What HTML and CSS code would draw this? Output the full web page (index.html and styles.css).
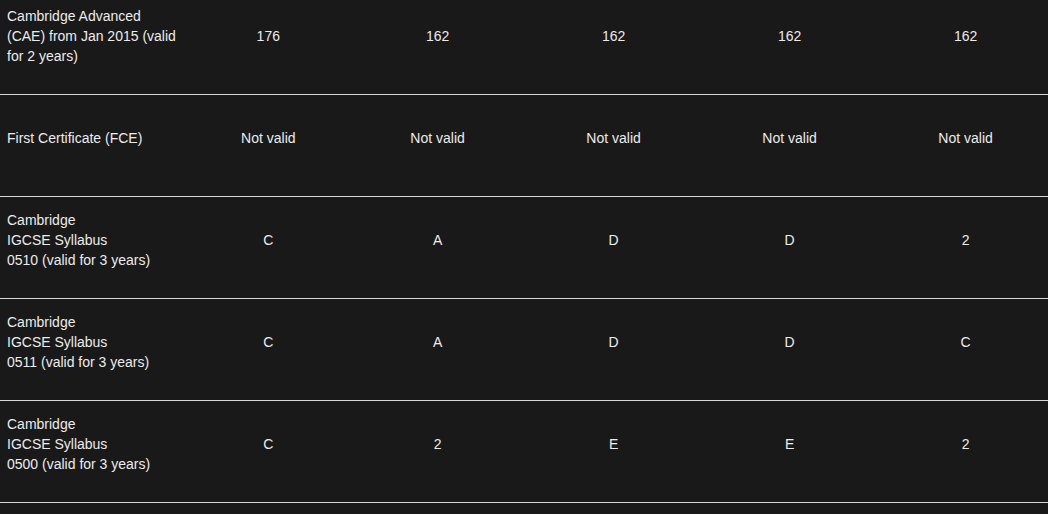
FILE: index.html
```html
<!DOCTYPE html>
<html lang="en">
<head>
<meta charset="utf-8">
<title>Entry requirements</title>
<link rel="stylesheet" href="styles.css">
</head>
<body>
<div class="table">
  <div class="row">
    <div class="label">Cambridge Advanced<br>(CAE) from Jan 2015 (valid<br>for 2 years)</div>
    <div class="cell">176</div>
    <div class="cell">162</div>
    <div class="cell">162</div>
    <div class="cell">162</div>
    <div class="cell">162</div>
  </div>
  <div class="row">
    <div class="label">First Certificate (FCE)</div>
    <div class="cell">Not valid</div>
    <div class="cell">Not valid</div>
    <div class="cell">Not valid</div>
    <div class="cell">Not valid</div>
    <div class="cell">Not valid</div>
  </div>
  <div class="row">
    <div class="label">Cambridge<br>IGCSE Syllabus<br>0510 (valid for 3 years)</div>
    <div class="cell">C</div>
    <div class="cell">A</div>
    <div class="cell">D</div>
    <div class="cell">D</div>
    <div class="cell">2</div>
  </div>
  <div class="row">
    <div class="label">Cambridge<br>IGCSE Syllabus<br>0511 (valid for 3 years)</div>
    <div class="cell">C</div>
    <div class="cell">A</div>
    <div class="cell">D</div>
    <div class="cell">D</div>
    <div class="cell">C</div>
  </div>
  <div class="row">
    <div class="label">Cambridge<br>IGCSE Syllabus<br>0500 (valid for 3 years)</div>
    <div class="cell">C</div>
    <div class="cell">2</div>
    <div class="cell">E</div>
    <div class="cell">E</div>
    <div class="cell">2</div>
  </div>
</div>
</body>
</html>
```

FILE: styles.css
```css
html, body {
  margin: 0;
  padding: 0;
  background: #191919;
}

body {
  font-family: "Liberation Sans", Arial, Helvetica, sans-serif;
  font-size: 14px;
  line-height: 20px;
  color: #ececec;
  overflow: hidden;
}

.table {
  margin-top: -7px;
  width: 1048px;
}

.row {
  display: grid;
  grid-template-columns: 181px 162.6px 176px 176px 176px 176px;
  align-items: center;
  height: 102px;
  box-sizing: border-box;
  padding-bottom: 16px;
  border-bottom: 1px solid #d6d6d6;
}

.label {
  padding-left: 7px;
}

.cell {
  padding-left: 12px;
  text-align: center;
}
```
